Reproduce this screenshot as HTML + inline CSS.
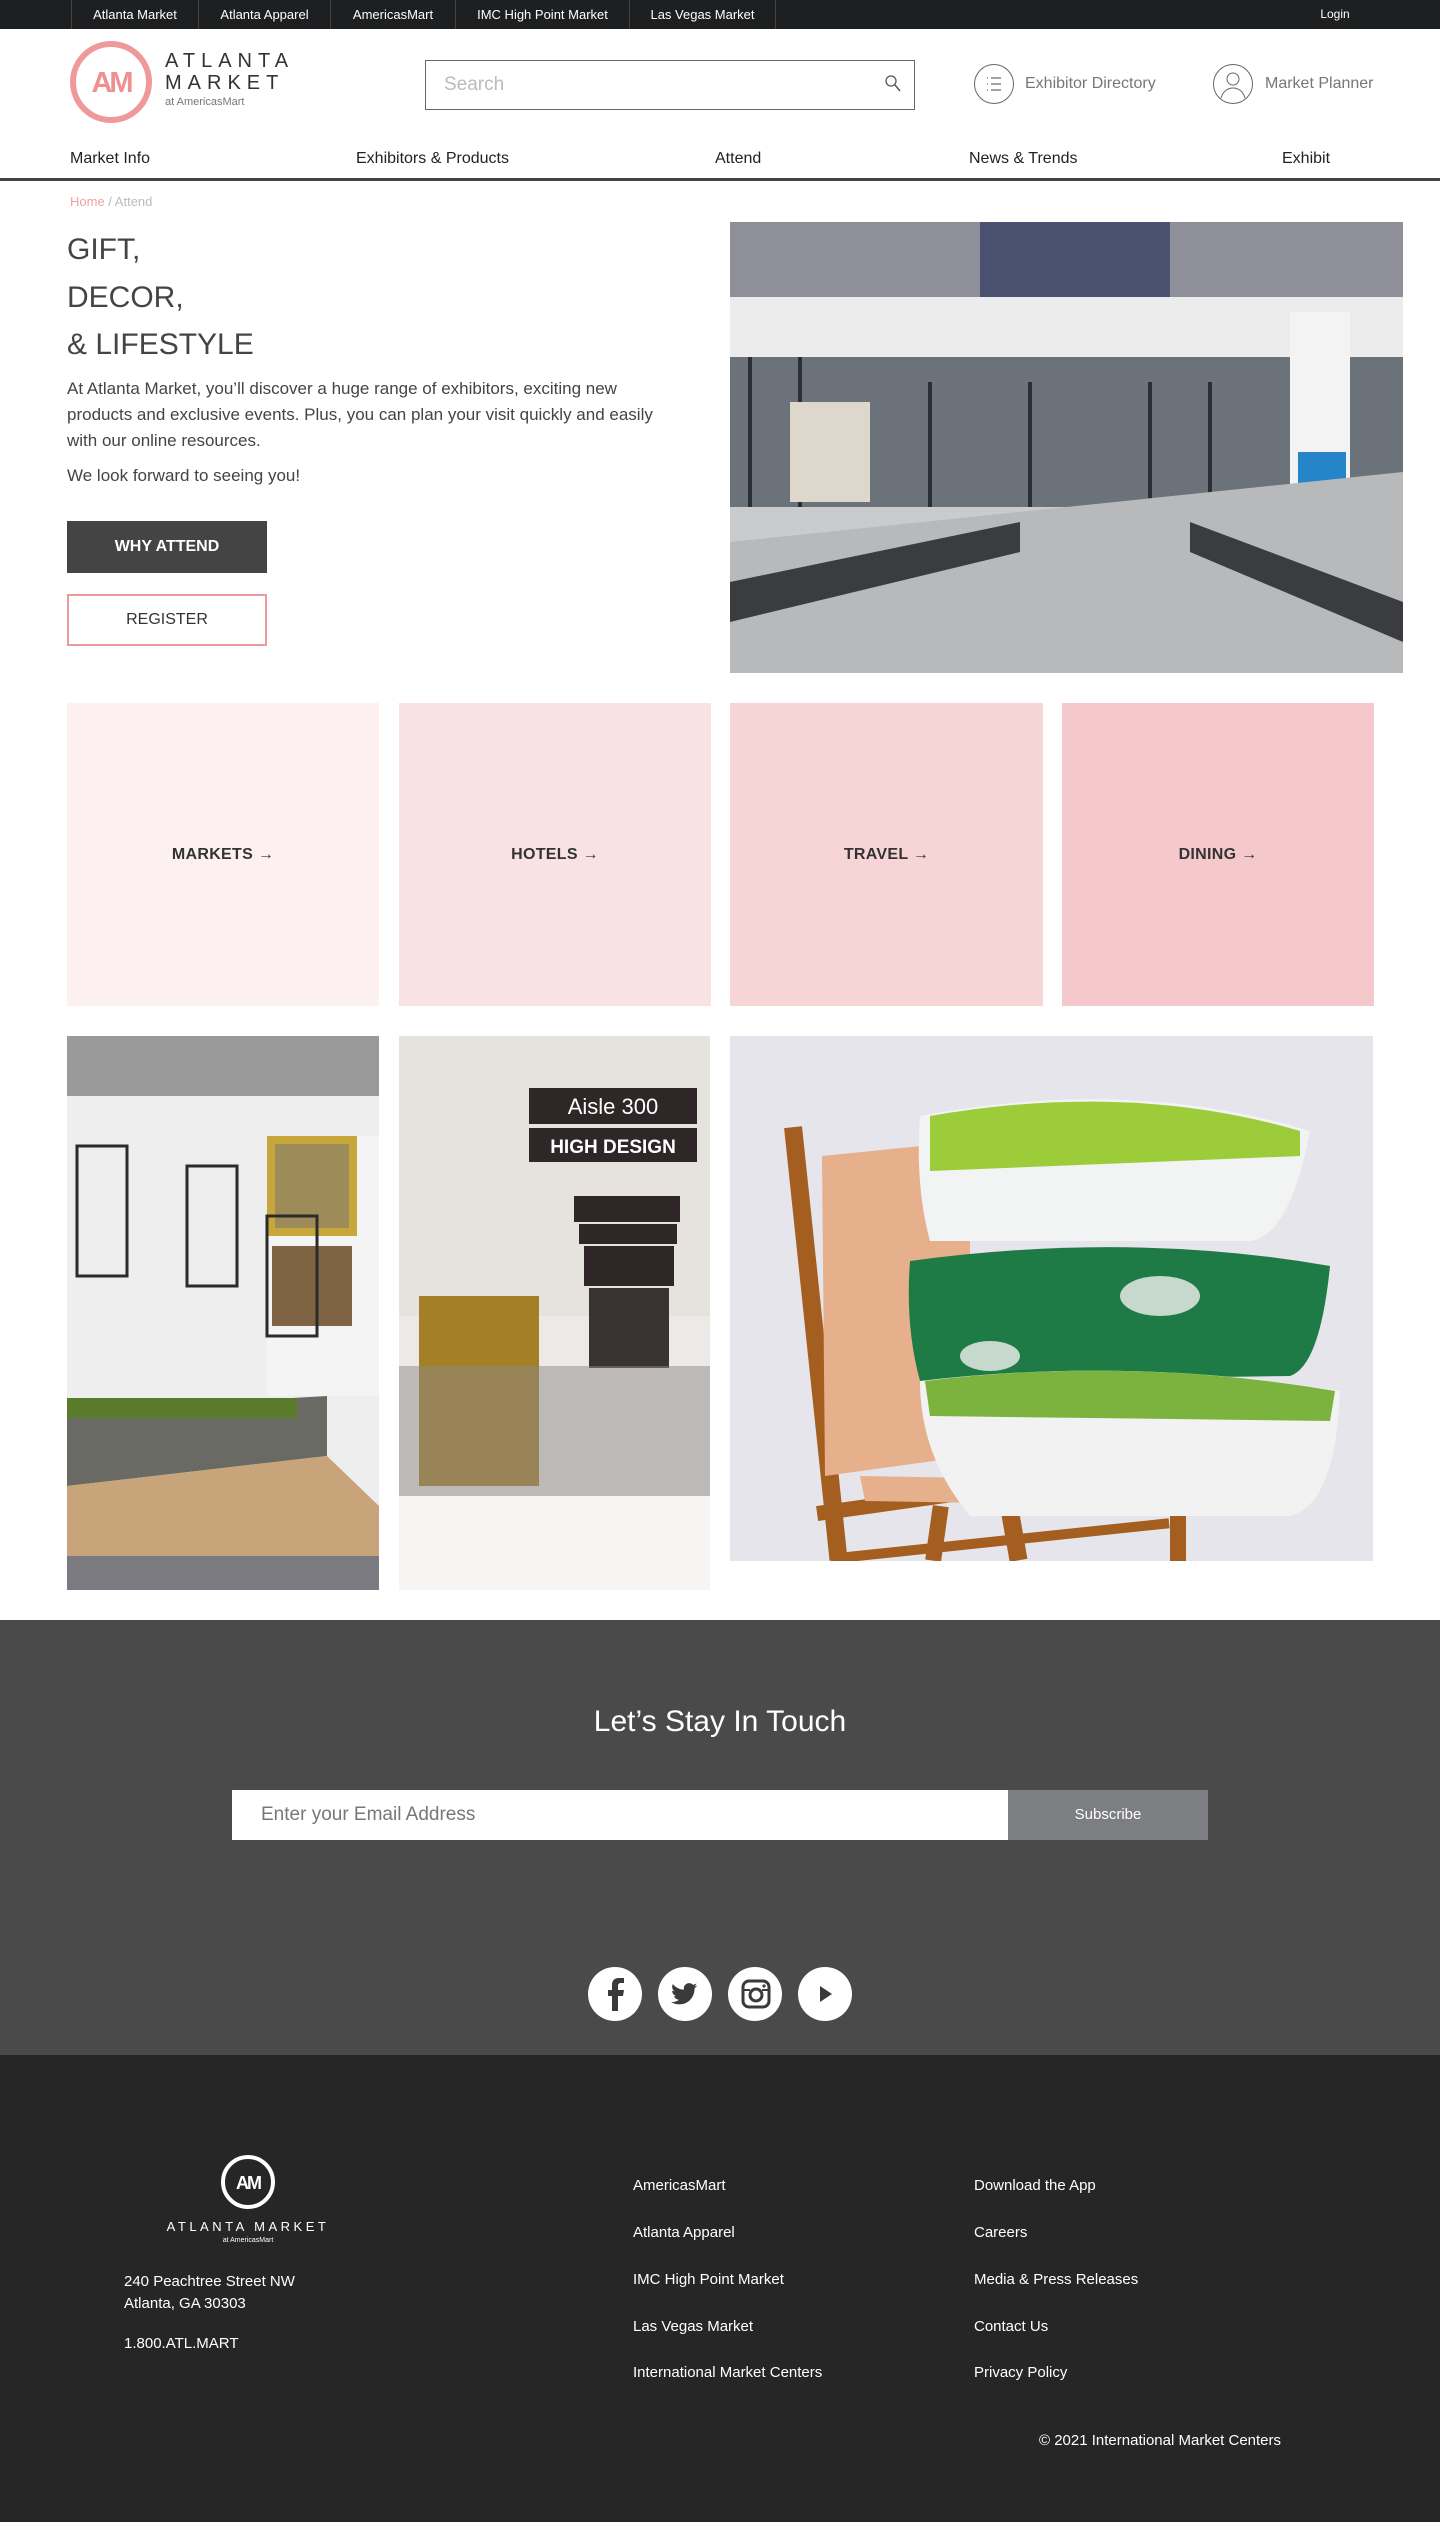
<!DOCTYPE html>
<html><head><meta charset="utf-8">
<style>
*{margin:0;padding:0;box-sizing:border-box}
body{width:1440px;height:2522px;background:#fff;font-family:"Liberation Sans",Arial,sans-serif;color:#333;position:relative;overflow:hidden}
.abs{position:absolute}
.topbar{left:0;top:0;width:1440px;height:29px;background:#1d1f21}
.topbar .it{position:absolute;top:0;height:29px;line-height:29px;color:#fff;font-size:13px;text-align:center;border-left:1px solid #444}
.nav span{position:absolute;top:150px;font-size:16px;color:#222}
.tile{position:absolute;top:703px;height:303px;width:312px;display:flex;align-items:center;justify-content:center;font-weight:bold;font-size:16px;color:#333;letter-spacing:.3px}
.fl{position:absolute;color:#fff;font-size:15px}
.soc{position:absolute;top:1967px;width:54px;height:54px;border-radius:50%;background:#fff}
</style></head><body>
<div class="abs topbar">
<div class="it" style="left:71px;width:127px">Atlanta Market</div>
<div class="it" style="left:198px;width:132px">Atlanta Apparel</div>
<div class="it" style="left:330px;width:125px">AmericasMart</div>
<div class="it" style="left:455px;width:174px">IMC High Point Market</div>
<div class="it" style="left:629px;width:147px;border-right:1px solid #444">Las Vegas Market</div>
<div class="it" style="left:1310px;width:50px;border:none;font-size:12px">Login</div>
</div>
<svg class="abs" style="left:68px;top:39px" width="90" height="86" viewBox="0 0 90 86">
<circle cx="43" cy="43" r="38" fill="none" stroke="#f0999b" stroke-width="6"/>
<text x="43" y="53" text-anchor="middle" font-family="Liberation Sans" font-weight="bold" font-size="29" fill="#ee8f92" letter-spacing="-3">AM</text>
</svg>
<div class="abs" style="left:165px;top:50px;font-size:20px;letter-spacing:6px;color:#333;line-height:22px">ATLANTA<br>MARKET</div>
<div class="abs" style="left:165px;top:96px;font-size:11px;color:#777">at AmericasMart</div>
<div class="abs" style="left:425px;top:60px;width:490px;height:50px;border:1px solid #666"></div>
<div class="abs" style="left:444px;top:74px;font-size:19px;color:#bbb">Search</div>
<svg class="abs" style="left:884px;top:74px" width="18" height="20"><circle cx="7" cy="7" r="5" fill="none" stroke="#555" stroke-width="1.3"/><line x1="11" y1="11" x2="16" y2="17" stroke="#555" stroke-width="1.5"/></svg>
<svg class="abs" style="left:973px;top:63px" width="42" height="42"><circle cx="21" cy="21" r="19.5" fill="none" stroke="#666"/><g stroke="#666" stroke-width="1.2"><line x1="14" y1="15" x2="15" y2="15"/><line x1="18" y1="15" x2="28" y2="15"/><line x1="14" y1="21" x2="15" y2="21"/><line x1="18" y1="21" x2="28" y2="21"/><line x1="14" y1="27" x2="15" y2="27"/><line x1="18" y1="27" x2="28" y2="27"/></g></svg>
<div class="abs" style="left:1025px;top:75px;font-size:16px;color:#777">Exhibitor Directory</div>
<svg class="abs" style="left:1212px;top:63px" width="42" height="42"><circle cx="21" cy="21" r="19.5" fill="none" stroke="#666"/><circle cx="21" cy="16" r="6" fill="none" stroke="#666"/><path d="M9 35c2-7 7-10 12-10s10 3 12 10" fill="none" stroke="#666"/></svg>
<div class="abs" style="left:1265px;top:75px;font-size:16px;color:#777">Market Planner</div>
<div class="nav">
<span style="left:70px">Market Info</span><span style="left:356px">Exhibitors &amp; Products</span><span style="left:715px">Attend</span><span style="left:969px">News &amp; Trends</span><span style="left:1282px">Exhibit</span>
</div>
<div class="abs" style="left:0;top:178px;width:1440px;height:3px;background:#444"></div>
<div class="abs" style="left:70px;top:194px;font-size:13px;color:#f0a0a3">Home <span style="color:#bbb">/ Attend</span></div>
<div class="abs" style="left:67px;top:226px;font-size:30px;line-height:47.5px;color:#444">GIFT,<br>DECOR,<br>&amp; LIFESTYLE</div>
<div class="abs" style="left:67px;top:376px;width:610px;font-size:17px;line-height:26px;color:#444">At Atlanta Market, you’ll discover a huge range of exhibitors, exciting new products and exclusive events. Plus, you can plan your visit quickly and easily with our online resources.</div>
<div class="abs" style="left:67px;top:466px;font-size:17px;color:#444">We look forward to seeing you!</div>
<div class="abs" style="left:67px;top:521px;width:200px;height:52px;background:#444;color:#fff;font-weight:bold;font-size:16px;line-height:52px;text-align:center">WHY ATTEND</div>
<div class="abs" style="left:67px;top:594px;width:200px;height:52px;border:2px solid #ee9a9c;color:#333;font-size:16px;line-height:48px;text-align:center">REGISTER</div>
<svg class="abs" style="left:730px;top:222px" width="673" height="451" viewBox="0 0 673 451">
<rect width="673" height="451" fill="#c9cbcd"/>
<rect width="673" height="85" fill="#8e8f99"/>
<rect x="250" y="0" width="190" height="75" fill="#4b5170"/>
<rect x="0" y="75" width="673" height="60" fill="#ececec"/>
<rect x="0" y="135" width="673" height="150" fill="#6b7279"/>
<g stroke="#2c3035" stroke-width="4"><line x1="20" y1="135" x2="20" y2="285"/><line x1="70" y1="135" x2="70" y2="285"/><line x1="200" y1="160" x2="200" y2="285"/><line x1="300" y1="160" x2="300" y2="285"/><line x1="420" y1="160" x2="420" y2="285"/><line x1="480" y1="160" x2="480" y2="285"/></g>
<rect x="560" y="90" width="60" height="230" fill="#f3f3f3"/>
<rect x="568" y="230" width="48" height="50" fill="#2585c8"/>
<polygon points="0,320 673,250 673,451 0,451" fill="#b8b9bb"/>
<polygon points="0,360 290,300 290,330 0,400" fill="#3a3c40"/>
<polygon points="460,300 673,380 673,420 460,330" fill="#3a3c40"/>
<rect x="60" y="180" width="80" height="100" fill="#ded8cc"/>
</svg>
<div class="tile" style="left:67px;background:#fdf0f1">MARKETS →</div>
<div class="tile" style="left:399px;background:#f9e2e4">HOTELS →</div>
<div class="tile" style="left:730px;background:#f7d5d7;width:313px">TRAVEL →</div>
<div class="tile" style="left:1062px;background:#f5c9cb">DINING →</div>
<svg class="abs" style="left:67px;top:1036px" width="312" height="554" viewBox="0 0 312 554">
<rect width="312" height="554" fill="#eeeeee"/>
<rect width="312" height="60" fill="#9a9a9a"/>
<rect x="200" y="100" width="112" height="260" fill="#f4f4f4"/>
<rect x="200" y="100" width="90" height="100" fill="#c7a63b"/><rect x="208" y="108" width="74" height="84" fill="#9e8b5a"/>
<rect x="205" y="210" width="80" height="80" fill="#7f6443"/>
<g fill="none" stroke="#2b2b2b" stroke-width="3"><rect x="10" y="110" width="50" height="130"/><rect x="120" y="130" width="50" height="120"/><rect x="200" y="180" width="50" height="120"/></g>
<polygon points="0,375 260,360 260,420 0,450" fill="#6a6a64"/>
<rect x="0" y="362" width="230" height="20" fill="#5a7a2c"/>
<polygon points="0,450 260,420 312,470 312,554 0,554" fill="#c8a47a"/>
<rect x="0" y="520" width="312" height="34" fill="#7a7a80"/>
</svg>
<svg class="abs" style="left:399px;top:1036px" width="311" height="554" viewBox="0 0 311 554">
<rect width="311" height="554" fill="#ece9e6"/>
<rect width="311" height="280" fill="#e6e3de"/>
<rect x="130" y="52" width="168" height="36" fill="#2f2627"/><rect x="130" y="92" width="168" height="34" fill="#2f2627"/>
<text x="214" y="78" fill="#fff" font-size="22" text-anchor="middle" font-family="Liberation Sans">Aisle 300</text>
<text x="214" y="117" fill="#fff" font-size="19" font-weight="bold" text-anchor="middle" font-family="Liberation Sans">HIGH DESIGN</text>
<rect x="175" y="160" width="106" height="26" fill="#2f2627"/><rect x="180" y="188" width="98" height="20" fill="#2f2627"/><rect x="185" y="210" width="90" height="40" fill="#2f2627"/><rect x="190" y="252" width="80" height="80" fill="#3a3334"/>
<rect x="20" y="260" width="120" height="190" fill="#a47f28"/>
<rect x="0" y="330" width="311" height="130" fill="#8d8987" opacity=".5"/>
<rect x="0" y="460" width="311" height="94" fill="#f6f5f4"/>
</svg>
<svg class="abs" style="left:730px;top:1036px" width="643" height="525" viewBox="0 0 643 525">
<rect width="643" height="525" fill="#e6e5ec"/>
<g fill="#a45f20"><rect x="76" y="90" width="18" height="435" transform="rotate(-6 85 300)"/><rect x="440" y="460" width="16" height="65"/><rect x="200" y="470" width="16" height="55" transform="rotate(8 208 490)"/><rect x="270" y="420" width="18" height="105" transform="rotate(-10 280 470)"/><rect x="85" y="445" width="360" height="15" transform="rotate(-8 265 450)"/><rect x="100" y="500" width="340" height="10" transform="rotate(-6 270 505)"/></g>
<polygon points="92,120 240,105 240,420 95,440" fill="#e6b08d"/>
<polygon points="130,440 430,445 430,470 135,465" fill="#e6b08d"/>
<path d="M190 80 Q400 40 580 95 Q560 200 520 205 L200 205 Q185 150 190 80Z" fill="#f2f3f3"/>
<path d="M200 80 Q400 45 570 95 L570 120 L200 135Z" fill="#9ccc3a"/>
<path d="M180 225 Q400 195 600 230 Q590 330 560 340 L190 345 Q175 290 180 225Z" fill="#1e7b45"/>
<ellipse cx="430" cy="260" rx="40" ry="20" fill="#c7d9cc"/><ellipse cx="260" cy="320" rx="30" ry="15" fill="#c7d9cc"/>
<path d="M190 345 Q400 320 610 355 Q605 470 560 480 L240 480 Q190 420 190 345Z" fill="#f1f2f1"/>
<path d="M195 345 Q400 320 605 355 L600 385 L200 380Z" fill="#7bb33e"/>
</svg>
<div class="abs" style="left:0;top:1620px;width:1440px;height:435px;background:#4a4a4a"></div>
<div class="abs" style="left:0;top:1705px;width:1440px;text-align:center;color:#fff;font-size:30px">Let’s Stay In Touch</div>
<div class="abs" style="left:232px;top:1790px;width:776px;height:50px;background:#fff"></div>
<div class="abs" style="left:261px;top:1804px;font-size:19px;color:#777">Enter your Email Address</div>
<div class="abs" style="left:1008px;top:1790px;width:200px;height:50px;background:#7d7e82;color:#fff;font-size:15px;line-height:50px;text-align:center">Subscribe</div>
<div class="soc" style="left:588px"></div><div class="soc" style="left:658px"></div><div class="soc" style="left:728px"></div><div class="soc" style="left:798px"></div>
<svg class="abs" style="left:588px;top:1967px" width="270" height="54" viewBox="0 0 270 54">
<path d="M30 44V29h5l1-6h-6v-4c0-2 1-3 3-3h3v-5h-5c-5 0-7 3-7 7v5h-4v6h4v15z" fill="#3a3a3a"/>
<g transform="translate(82 13) scale(1.15)"><path d="M23.643 4.937c-.835.37-1.732.62-2.675.733.962-.576 1.7-1.49 2.048-2.578-.9.534-1.897.922-2.958 1.13-.85-.904-2.06-1.47-3.4-1.47-2.572 0-4.658 2.086-4.658 4.66 0 .364.042.718.12 1.06-3.873-.195-7.304-2.05-9.602-4.868-.4.69-.63 1.49-.63 2.342 0 1.616.823 3.043 2.072 3.878-.764-.025-1.482-.234-2.11-.583v.06c0 2.257 1.605 4.14 3.737 4.568-.392.106-.803.162-1.227.162-.3 0-.593-.028-.877-.082.593 1.85 2.313 3.198 4.352 3.234-1.595 1.25-3.604 1.995-5.786 1.995-.376 0-.747-.022-1.112-.065 2.062 1.323 4.51 2.093 7.14 2.093 8.57 0 13.255-7.098 13.255-13.254 0-.2-.005-.402-.014-.602.91-.658 1.7-1.478 2.323-2.41z" fill="#3a3a3a"/></g>
<rect x="155" y="14" width="26" height="26" rx="6" fill="none" stroke="#3a3a3a" stroke-width="3"/><circle cx="168" cy="28" r="6" fill="none" stroke="#3a3a3a" stroke-width="3"/><circle cx="176" cy="19" r="1.6" fill="#3a3a3a"/><line x1="156" y1="23" x2="162" y2="23" stroke="#3a3a3a" stroke-width="2"/><line x1="174" y1="23" x2="180" y2="23" stroke="#3a3a3a" stroke-width="2"/>
<path d="M232 19v16l12-8z" fill="#3a3a3a"/>
</svg>
<div class="abs" style="left:0;top:2055px;width:1440px;height:467px;background:#262626"></div>
<svg class="abs" style="left:220px;top:2154px" width="56" height="56"><circle cx="28" cy="28" r="25" fill="none" stroke="#fff" stroke-width="4"/><text x="28" y="35" text-anchor="middle" fill="#fff" font-weight="bold" font-size="18" font-family="Liberation Sans" letter-spacing="-2">AM</text></svg>
<div class="abs" style="left:148px;top:2219px;width:200px;text-align:center;color:#fff;font-size:13px;letter-spacing:3.5px">ATLANTA MARKET</div>
<div class="abs" style="left:148px;top:2237px;width:200px;text-align:center;color:#fff;font-size:7px">at AmericasMart</div>
<div class="fl" style="left:124px;top:2271px;line-height:22px">240 Peachtree Street NW<br>Atlanta, GA 30303</div>
<div class="fl" style="left:124px;top:2335px">1.800.ATL.MART</div>
<div class="fl" style="left:633px;top:2177px">AmericasMart</div>
<div class="fl" style="left:633px;top:2224px">Atlanta Apparel</div>
<div class="fl" style="left:633px;top:2271px">IMC High Point Market</div>
<div class="fl" style="left:633px;top:2318px">Las Vegas Market</div>
<div class="fl" style="left:633px;top:2364px">International Market Centers</div>
<div class="fl" style="left:974px;top:2177px">Download the App</div>
<div class="fl" style="left:974px;top:2224px">Careers</div>
<div class="fl" style="left:974px;top:2271px">Media &amp; Press Releases</div>
<div class="fl" style="left:974px;top:2318px">Contact Us</div>
<div class="fl" style="left:974px;top:2364px">Privacy Policy</div>
<div class="fl" style="left:1039px;top:2432px">© 2021 International Market Centers</div>
</body></html>
